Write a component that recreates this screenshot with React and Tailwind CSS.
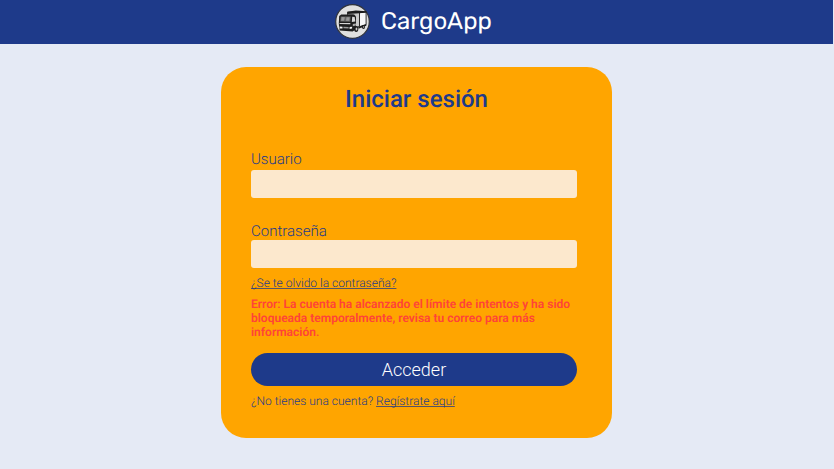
function TruckLogo() {
  return (
    <svg className="-mt-px h-[35px] w-[35px] shrink-0" viewBox="0 0 35 35" fill="none" aria-hidden="true">
      <circle cx="17.5" cy="17.5" r="16.8" fill="#e0e0e0" stroke="#30343d" strokeWidth="1.2" />
      <path d="M12.5 8.2 24.5 7.4v14.8l-6 1.8V11h-6Z" fill="#c9c9c9" stroke="#1b1b1b" strokeWidth=".7" />
      <path d="m24.5 8.6 6.6-.6v12.5l-6.6 2.2Z" fill="#f8f8f8" stroke="#1b1b1b" strokeWidth=".9" />
      <path d="m12.3 7.7 8.5-1.2 10.7.8v1.1l-7 .8-12.2.7Z" fill="#1b1b1b" />
      <path d="m4.2 12 2-1.5 13 .1 1.8 2v12.6l-3.4 2.4-13-1-.8-7Z" fill="#1d1d1d" />
      <path d="m5.7 12.4 10 .2-.4 5.1-10.1-.1Z" fill="#666" />
      <path d="m6.6 13.1 3.3.1-1 3.6H6.1ZM11.5 13.2h3.2l-.5 3.6H11Z" fill="#989898" />
      <path d="m17.2 12.7 2.5.2.6 4.6-3.5.6Z" fill="#d7d7d7" />
      <path d="m4.5 18.9 10.8.2v1.1L4.6 20Z" fill="#d5d5d5" />
      <path d="m4.7 22.6 2.8.2v1.8l-2.8-.2ZM14.6 22.9l2.5-.2v1.9l-2.5.3Z" fill="#f5f5f5" />
      <path d="m8.4 22.7 5.2.2v1.5l-5.2-.2Z" fill="#999" />
      <path d="m17.8 20 3.1-.5v2l-3.1.8Z" fill="#aaa" />
      <ellipse cx="21.2" cy="25" rx="2.1" ry="3" fill="#1b1b1b" />
      <ellipse cx="21.5" cy="25" rx=".9" ry="1.5" fill="#c8c8c8" />
      <path d="m23.2 22.9 8.1-2.7v1.6l-7.8 3Z" fill="#1b1b1b" />
      <ellipse cx="28.5" cy="23" rx="1.6" ry="2.1" fill="#1b1b1b" />
      <ellipse cx="28.7" cy="23" rx=".6" ry=".9" fill="#aaa" />
    </svg>
  );
}

function Field({ id, label, type, className, labelClassName }) {
  return (
    <div className={className}>
      <label htmlFor={id} className={`block text-[15px] leading-5 ${labelClassName}`}>{label}</label>
      <input id={id} type={type} className="block h-7 w-full rounded-[3px] bg-[#fce8cd] px-2 outline-none" />
    </div>
  );
}

export default function App() {
  return (
    <div className="flex h-[469px] w-[834px] flex-col overflow-hidden bg-[#e5eaf5] font-['Roboto',sans-serif] [text-rendering:geometricPrecision]">
      <header className="flex h-11 w-[833px] shrink-0 items-center bg-[#1e3a8a] pl-[335px] text-white">
        <TruckLogo />
        <span className="ml-[11px] -mt-[3px] font-['Rubik','Roboto',sans-serif] text-2xl leading-7">CargoApp</span>
      </header>
      <main className="mt-[23px] ml-[221px] h-[371px] w-[391px] rounded-[25px] bg-[#ffa500] pr-[35px] pl-[30px] font-light text-[#1e3a8a]">
        <h1 className="-mr-[5px] h-[82px] pt-[18px] text-center text-2xl leading-7 font-medium">Iniciar sesión</h1>
        <form onSubmit={(event) => event.preventDefault()}>
          <Field id="user" label="Usuario" type="text" labelClassName="h-[21px]" />
          <Field id="password" label="Contraseña" type="password" className="pt-[23px]" labelClassName="h-[19px]" />
          <a href="#" className="mt-2 block text-xs leading-[14px] underline decoration-[#1e3a8a]/75 [text-decoration-skip-ink:none]">¿Se te olvido la contraseña?</a>
          <p className="mt-[7px] text-xs leading-[14px] font-semibold text-[#ff4338]">
            Error: La cuenta ha alcanzado el límite de intentos y ha sido<br />
            bloqueada temporalmente, revisa tu correo para más<br />
            información.
          </p>
          <button type="submit" className="mt-[14px] block h-[33px] w-full rounded-full bg-[#1e3a8a] text-lg leading-[33px] font-light text-white">Acceder</button>
          <p className="mt-2 text-xs leading-[14px]">
            ¿No tienes una cuenta? <a href="#" className="underline decoration-[#1e3a8a]/75 [text-decoration-skip-ink:none]">Regístrate aquí</a>
          </p>
        </form>
      </main>
    </div>
  );
}
